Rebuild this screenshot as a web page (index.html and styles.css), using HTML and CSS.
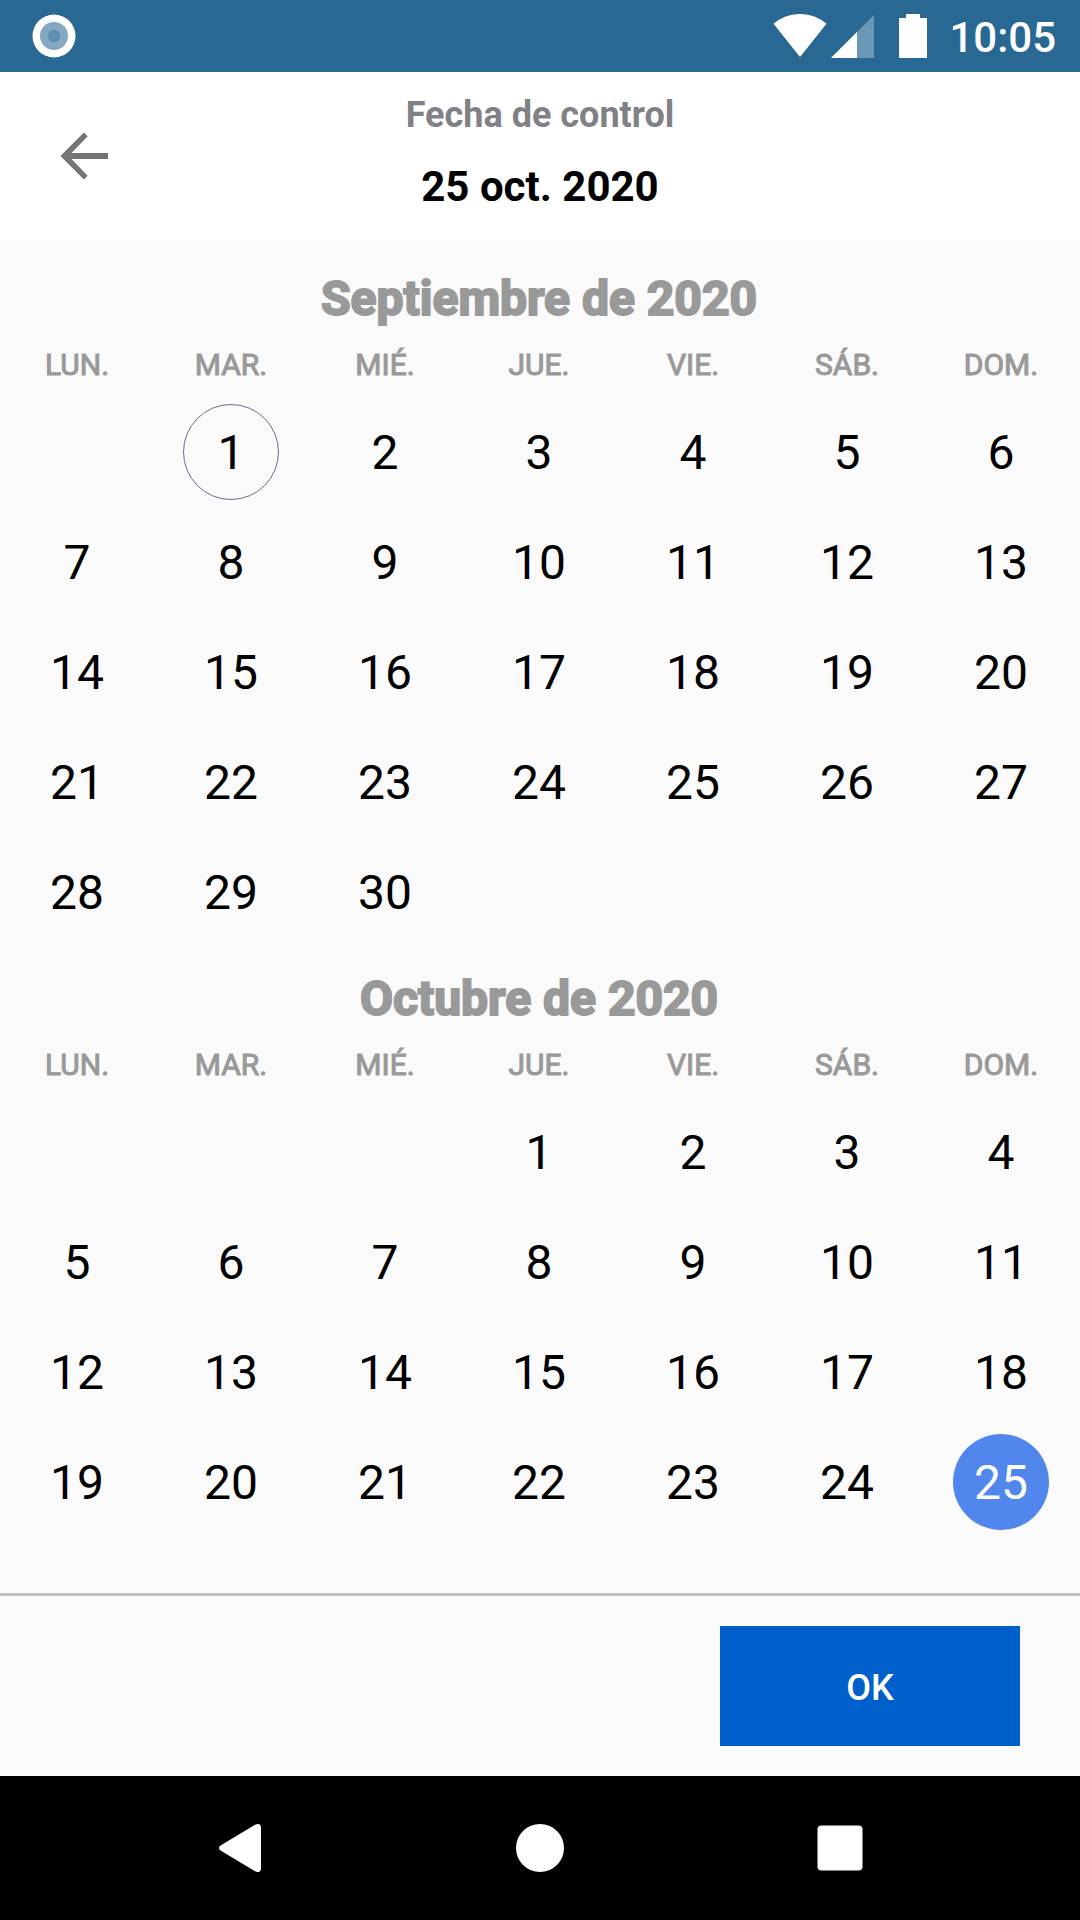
FILE: index.html
```html
<!DOCTYPE html>
<html lang="es">

<head>
    <meta charset="UTF-8">
    <meta name="viewport" content="width=device-width, initial-scale=1.0">
    <title>Fecha de control</title>
    <link rel="stylesheet" href="styles.css">
</head>

<body>
    <div class="status-bar">
        <svg class="status-dot" width="44" height="44" viewBox="0 0 44 44">
            <circle cx="22" cy="22" r="21.5" fill="#fff" />
            <circle cx="22" cy="22" r="14" fill="#84a8c2" />
            <circle cx="22" cy="22" r="6.3" fill="#5f8fb1" />
        </svg>
        <div class="status-right">
            <svg class="wifi" width="54" height="44" viewBox="0 0 54 44">
                <path d="M27 43L.5 9.800C8 3.500 17 0 27 0s19 3.500 26.500 9.800z" fill="#fff" />
            </svg>
            <svg class="signal" width="43" height="43" viewBox="0 0 43 43">
                <path d="M0 43L43 0v43z" fill="#6c97b7" />
                <path d="M0 43L26 17v26z" fill="#fff" />
            </svg>
            <svg class="battery" width="28" height="44" viewBox="0 0 28 44">
                <path d="M7 0h14v4h7v40H0V4h7z" fill="#fff" />
            </svg>
            <span class="clock">10:05</span>
        </div>
    </div>

    <header class="header">
        <button type="button" class="back" aria-label="Atrás">
            <svg width="48" height="48" viewBox="0 0 48 48">
                <path d="M48 21H11.500L27.700 4.200L23.900 .4L.4 24l23.500 23.600l3.800-3.800L11.500 27H48z" fill="#757575" />
            </svg>
        </button>
        <div class="header-text">
            <h1 class="header-title">Fecha de control</h1>
            <p class="header-date">25 oct. 2020</p>
        </div>
    </header>

    <main class="calendar" id="calendar"></main>

    <footer class="footer">
        <button type="button" class="ok">OK</button>
    </footer>

    <nav class="nav-bar">
        <button type="button" class="nav-button" aria-label="Volver">
            <svg width="48" height="48" viewBox="0 0 48 48">
                <path d="M4.500 21.500L39.500 .6Q45 -1.500 45 4V44Q45 49.500 39.500 47.400L4.500 26.500Q1.500 24 4.500 21.500z" fill="#fff" />
            </svg>
        </button>
        <button type="button" class="nav-button" aria-label="Inicio">
            <svg width="48" height="48" viewBox="0 0 48 48">
                <circle cx="24" cy="24" r="24" fill="#fff" />
            </svg>
        </button>
        <button type="button" class="nav-button" aria-label="Recientes">
            <svg width="48" height="48" viewBox="0 0 48 48">
                <rect x="1.500" y="1.500" width="45" height="45" rx="4" fill="#fff" />
            </svg>
        </button>
    </nav>

    <script src="script.js"></script>
</body>

</html>
```

FILE: styles.css
```css
* {
    box-sizing: border-box;
}

body {
    margin: 0;
    min-height: 100vh;
    display: flex;
    flex-direction: column;
    background-color: #fafafa;
    font-family: Roboto, sans-serif;
    color: #000;
}

button {
    border: none;
    padding: 0;
    background: none;
    color: inherit;
    font-family: inherit;
    cursor: pointer;
}

svg {
    display: block;
}

/* status bar */
.status-bar {
    display: flex;
    align-items: center;
    justify-content: space-between;
    height: 72px;
    padding: 0 24px 0 32px;
    background-color: #296893;
    color: #fff;
}

.status-right {
    display: flex;
    align-items: center;
}

.signal {
    margin-left: 4px;
}

.battery {
    margin: 0 22px 0 25px;
}

.clock {
    padding-top: 3px;
    font-size: 42px;
    font-weight: 500;
    line-height: 69px;
}

/* header */
.header {
    display: grid;
    grid-template-columns: 168px 1fr 168px;
    align-items: center;
    height: 168px;
    background-color: #fff;
    text-align: center;
}

.back {
    display: flex;
    align-items: center;
    justify-content: center;
    height: 168px;
}

.header-text {
    padding-bottom: 6px;
}

.header-title {
    margin: 0 0 20px;
    font-size: 36px;
    line-height: 48px;
    font-weight: bold;
    color: #808086;
}

.header-date {
    margin: 0;
    font-size: 42px;
    line-height: 56px;
    font-weight: bold;
}

/* calendar */
.calendar {
    flex: 1;
    padding: 7px 2px 0 0;
}

.month {
    width: 100%;
    table-layout: fixed;
    border-collapse: collapse;
    text-align: center;
}

.month caption {
    padding-top: 20px;
    font-size: 48px;
    line-height: 64px;
    font-weight: bold;
    color: #999;
    -webkit-text-stroke: 2px #999;
}

.month th {
    height: 66px;
    padding: 0;
    font-size: 30px;
    font-weight: normal;
    color: #999;
    -webkit-text-stroke: 1px #999;
}

.month td {
    height: 110px;
    padding: 0;
}

.day {
    width: 96px;
    height: 96px;
    border-radius: 50%;
    font-size: 48px;
}

.day.today {
    border: 1px solid #66708f;
}

.day.selected {
    background-color: #5187ed;
    color: #fff;
}

/* footer */
.footer {
    display: flex;
    justify-content: flex-end;
    padding: 30px 60px;
    border-top: 3px solid #c3c3c3;
}

.ok {
    width: 300px;
    height: 120px;
    padding-top: 3px;
    background-color: #0060cb;
    color: #fff;
    font-size: 36px;
    font-weight: 500;
}

/* navigation bar */
.nav-bar {
    display: flex;
    justify-content: center;
    gap: 102px;
    height: 144px;
    background-color: #000;
}

.nav-button {
    display: flex;
    align-items: center;
    justify-content: center;
    width: 198px;
}
```

FILE: script.js
```javascript
const weekdays = ["LUN.", "MAR.", "MIÉ.", "JUE.", "VIE.", "SÁB.", "DOM."];

// start is the column of day 1 (0 = monday), last is the last day that can be picked
const months = [
    { name: "Septiembre de 2020", start: 1, last: 30, today: 1 },
    { name: "Octubre de 2020", start: 3, last: 25, selected: 25 }
];

function createMonth(month) {
    const table = document.createElement("table");
    table.className = "month";
    table.createCaption().textContent = month.name;

    const head = table.createTHead().insertRow();
    weekdays.forEach(function (name) {
        const th = document.createElement("th");
        th.scope = "col";
        th.textContent = name;
        head.appendChild(th);
    });

    const body = table.createTBody();
    const rows = Math.ceil((month.start + month.last) / 7);
    for (let r = 0; r < rows; r++) {
        const row = body.insertRow();
        for (let c = 0; c < 7; c++) {
            const cell = row.insertCell();
            const day = r * 7 + c - month.start + 1;
            if (day < 1 || day > month.last) {
                continue;
            }
            const button = document.createElement("button");
            button.type = "button";
            button.className = "day";
            button.textContent = day;
            if (day === month.today) {
                button.classList.add("today");
            }
            if (day === month.selected) {
                button.classList.add("selected");
            }
            cell.appendChild(button);
        }
    }
    return table;
}

const calendar = document.getElementById("calendar");
months.forEach(function (month) {
    calendar.appendChild(createMonth(month));
});
```
